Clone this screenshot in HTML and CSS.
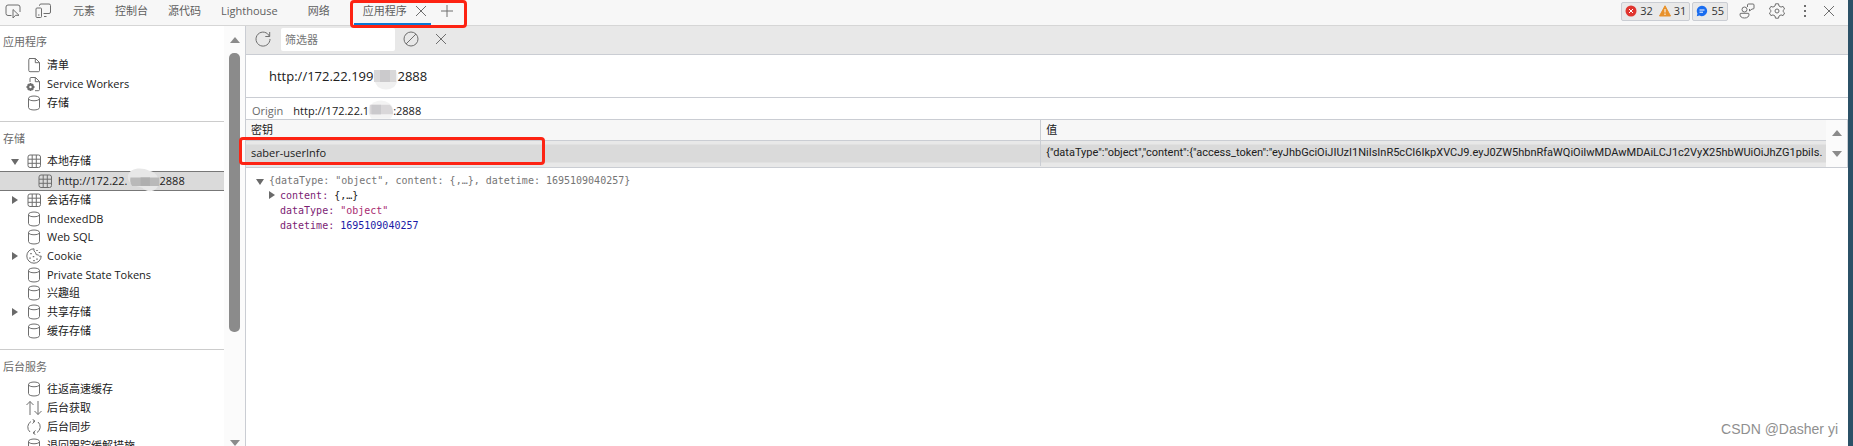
FILE: index.html
```html
<!DOCTYPE html>
<html lang="zh-CN">
<head>
<meta charset="utf-8">
<title>DevTools</title>
<link rel="stylesheet" href="styles.css">
</head>
<body>
<svg class="defs" aria-hidden="true">
  <symbol id="db" viewBox="0 0 16 16"><path d="M2.5 3.500C2.500 .2 13.500 .2 13.500 3.500V12.500C13.500 15.800 2.500 15.800 2.500 12.500ZM2.500 3.500C2.500 6.500 13.500 6.500 13.500 3.500"/></symbol>
  <symbol id="grid" viewBox="0 0 16 16"><rect x="2" y="2" width="12.500" height="12.500" rx="2"/><path d="M2 6.200H14.500M2 10.300H14.500M6.200 2V14.500M10.300 2V14.500"/></symbol>
  <symbol id="doc" viewBox="0 0 16 16"><path d="M3 1.500H9.500L13.500 5.500V13.500Q13.500 14.700 12.300 14.700H4Q2.800 14.700 2.800 13.500V2.700Q2.800 1.500 4 1.500M9.300 1.500V5.700H13.500"/></symbol>
  <symbol id="x" viewBox="0 0 16 16"><path d="M3 3L13 13M13 3L3 13"/></symbol>
</svg>
<div class="window">
  <header class="topbar">
    <button class="tool" aria-label="检查元素"><svg viewBox="0 0 16 16"><path d="M6.500 12.500H3Q1 12.500 1 10.500V4Q1 2 3 2H13Q15 2 15 4V9M8 6.500V15L10.500 12.300H14Z"/></svg></button>
    <button class="tool" aria-label="设备仿真"><svg viewBox="0 0 16 16"><path d="M4.500 3V2.500Q4.500 1 6 1H14Q15.500 1 15.500 2.500V9Q15.500 10.500 14 10.500H8.500M9 13.500H11.500M2 5H5.500Q6.500 5 6.500 6V13.500Q6.500 14.500 5.500 14.500H2Q1 14.500 1 13.500V6Q1 5 2 5M3 12H4.500"/></svg></button>
    <nav class="tabs">
      <button class="tab">元素</button>
      <button class="tab">控制台</button>
      <button class="tab">源代码</button>
      <button class="tab light">Lighthouse</button>
      <button class="tab net">网络</button>
      <div class="active"><button class="tab">应用程序</button><button class="close" aria-label="关闭标签"><svg><use href="#x"/></svg></button></div>
      <button class="plus" aria-label="更多标签"><svg viewBox="0 0 16 16"><path d="M8 2V14M2 8H14"/></svg></button>
      <span class="mark mark-tab"></span>
    </nav>
    <button class="badge"><svg viewBox="0 0 12 12"><circle cx="6" cy="6" r="5.500" fill="#e0352f"/><path d="M4 4L8 8M8 4L4 8" stroke="#fff"/></svg>32<svg class="warn" viewBox="0 0 12 12"><path d="M6 .8L11.500 11H.5Z" fill="#e8912a" stroke="#e8912a" stroke-linejoin="round"/><path d="M6 4V7.500M6 8.500V10" stroke="#fff"/></svg>31</button>
    <button class="badge info"><svg viewBox="0 0 12 12"><path d="M6 .8A5.200 5.200 0 1 1 3.500 10.600L.8 11.300L1.400 8.500A5.200 5.200 0 0 1 6 .8Z" fill="#1a6df0"/><path d="M3.500 5H8.500M3.500 7.200H7" stroke="#fff"/></svg>55</button>
    <button class="tool feedback" aria-label="反馈"><svg viewBox="0 0 16 16"><circle cx="5.500" cy="6.500" r="2.500"/><path d="M1 11Q1 10.300 2 10.300H9Q10 10.300 10 11Q10 15 5.500 15Q1 15 1 11ZM8.500 4V2Q8.500 1 9.500 1H14Q15 1 15 2V5Q15 6 14 6H13L10.500 8V6"/></svg></button>
    <button class="tool gear" aria-label="设置"><svg viewBox="0 0 16 16"><circle cx="8" cy="8" r="2"/><path d="M6.500 .8H9.500L10 3L12 4.100L14.100 3.400L15.600 6L14 7.500V8.500L15.600 10L14.100 12.600L12 11.900L10 13L9.500 15.200H6.500L6 13L4 11.900L1.900 12.600L.4 10L2 8.500V7.500L.4 6L1.900 3.400L4 4.100L6 3Z" stroke-linejoin="round"/></svg></button>
    <button class="tool dots" aria-label="更多"><svg viewBox="0 0 16 16"><path d="M8 2V4M8 7V9M8 12V14" stroke-width="2"/></svg></button>
    <button class="tool" aria-label="关闭"><svg><use href="#x"/></svg></button>
  </header>
  <div class="body">
    <aside class="sidebar">
      <div class="sections">
        <section>
          <h2>应用程序</h2>
          <ul>
            <li><svg><use href="#doc"/></svg>清单</li>
            <li><svg viewBox="0 0 16 16"><path d="M4 6V2.700Q4 1.500 5 1.500H9.500L13.500 5.500V13.500Q13.500 14.700 12.300 14.700H9M9.300 1.500V5.700H13.500"/><circle cx="4.500" cy="11" r="2.200" stroke-width="2"/><path d="M4.500 7V8.500M4.500 13.500V15M.5 11H2M7 11H8.500M1.800 8.300L2.800 9.300M6.200 12.700L7.200 13.700M7.200 8.300L6.200 9.300M2.800 12.700L1.800 13.700" stroke-width="2"/></svg>Service Workers</li>
            <li><svg><use href="#db"/></svg>存储</li>
          </ul>
        </section>
        <section>
          <h2>存储</h2>
          <ul>
            <li class="open"><svg><use href="#grid"/></svg>本地存储</li>
            <li class="child"><svg><use href="#grid"/></svg>http://172.22.<span class="redact r-side"><svg viewBox="0 0 40 30"><path d="M1 10C3 0 18 0 26 4C36 6 38 14 37 20C35 30 23 30 18 24C10 22 0 20 1 10Z" fill="#e7e7e7"/><path d="M4 12H38V22H6Q3 18 4 12Z" fill="#b9b9b9"/><path d="M16 12H27V22H16Z" fill="#afafaf"/></svg></span>2888</li>
            <li class="closed"><svg><use href="#grid"/></svg>会话存储</li>
            <li><svg><use href="#db"/></svg>IndexedDB</li>
            <li><svg><use href="#db"/></svg>Web SQL</li>
            <li class="closed"><svg viewBox="0 0 16 16"><path d="M8 .8A7.200 7.200 0 1 0 15.200 8Q13.500 9 12.300 7Q9.500 7.500 9.500 4.500Q7.200 3.500 8 .8Z"/><path d="M5 5V6.200M4 9.500V10.700M7.500 8V9.200M8 12V13.200M11 10.500V11.700M11 2V3M13.500 4V5" stroke-width="1.500"/></svg>Cookie</li>
            <li><svg><use href="#db"/></svg>Private State Tokens</li>
            <li><svg><use href="#db"/></svg>兴趣组</li>
            <li class="closed"><svg><use href="#db"/></svg>共享存储</li>
            <li><svg><use href="#db"/></svg>缓存存储</li>
          </ul>
        </section>
        <section>
          <h2>后台服务</h2>
          <ul>
            <li><svg><use href="#db"/></svg>往返高速缓存</li>
            <li><svg viewBox="0 0 16 16"><path d="M4 15V1.500M.5 5L4 1.500L7.500 5M12 1V14.500M8.500 11L12 14.500L15.500 11"/></svg>后台获取</li>
            <li><svg viewBox="0 0 16 16"><path d="M5 2.500A6.500 6.500 0 0 0 4 13M11 13.500A6.500 6.500 0 0 0 12 3M6.500 .2L9 2.200L6.500 4.500M9.500 11.500L7 13.800L9.500 15.800M9 2.200H7M7 13.800H9"/></svg>后台同步</li>
            <li><svg><use href="#db"/></svg>退回跟踪缓解措施</li>
          </ul>
        </section>
      </div>
      <div class="scrollbar"><i class="up"></i><i class="thumb"></i><i class="down"></i></div>
    </aside>
    <main>
      <div class="toolbar">
        <button class="tool" aria-label="刷新"><svg viewBox="0 0 16 16"><path d="M14.500 5.500A7 7 0 1 0 15 8M14.700 1V5.500H10.300"/></svg></button>
        <input type="text" placeholder="筛选器" aria-label="筛选器">
        <button class="tool" aria-label="全部清除"><svg viewBox="0 0 16 16"><circle cx="8" cy="8" r="7"/><path d="M13 3L3 13"/></svg></button>
        <button class="tool" aria-label="删除所选项"><svg><use href="#x"/></svg></button>
      </div>
      <h1>http://172.22.199<span class="redact r-title"><svg viewBox="0 0 26 24"><path d="M2 2H24Q28 12 22 19Q14 24 6 19Q0 12 2 2Z" fill="#f0f0f0"/><path d="M2 2H24V14H2Z" fill="#d9d8d9"/><path d="M8 2H18V14H8Z" fill="#cbcacc"/></svg></span>2888</h1>
      <div class="origin"><span class="label">Origin</span><span>http://172.22.1<span class="redact r-origin"><svg viewBox="0 0 30 22"><path d="M1 8Q6 0 15 0Q26 1 29 9Q30 17 26 21H4Q-1 15 1 8Z" fill="#f3f3f3"/><path d="M2 5H25Q29 8 29 16H2Z" fill="#d9d7d9"/><path d="M4 5H15V16H4Z" fill="#cac9cc"/></svg></span>:2888</span></div>
      <div class="grid">
        <table>
          <thead><tr><th>密钥</th><th>值</th></tr></thead>
          <tbody><tr><td>saber-userInfo</td><td class="value">{"dataType":"object","content":{"access_token":"eyJhbGciOiJIUzI1NiIsInR5cCI6IkpXVCJ9.eyJ0ZW5hbnRfaWQiOiIwMDAwMDAiLCJ1c2VyX25hbWUiOiJhZG1pbiIs.</td></tr></tbody>
        </table>
        <div class="stepper"><i class="up"></i><i class="down"></i></div>
        <span class="mark mark-row"></span>
      </div>
      <div class="tree">
        <div class="root open">{dataType: "object", content: {,…}, datetime: 1695109040257}</div>
        <div class="prop closed"><b>content:</b> {,…}</div>
        <div class="prop"><b>dataType:</b> <span class="str">"object"</span></div>
        <div class="prop"><b>datetime:</b> <span class="num">1695109040257</span></div>
      </div>
    </main>
  </div>
  <div class="watermark">CSDN @Dasher yi</div>
</div>
</body>
</html>
```
FILE: styles.css
```css
* { box-sizing: border-box; }
body {
  margin: 0;
  font: 11px/18px "Open Sans", "Noto Sans CJK SC", sans-serif;
  color: #202020;
  background: #fff;
}
button { border: 0; padding: 0; background: none; font: inherit; color: inherit; }
svg { fill: none; stroke: #6e6e6e; width: 16px; height: 16px; flex: none; display: block; }
.defs { position: absolute; width: 0; height: 0; }
.window {
  position: relative;
  height: 100vh;
  display: flex;
  flex-direction: column;
  overflow: hidden;
  border-right: 5px solid #2b5167;
}

.topbar {
  height: 26px;
  flex: none;
  display: flex;
  align-items: center;
  padding: 0 11px 3px 5px;
  gap: 14px;
  background: #f7f7f7;
  border-bottom: 1px solid #d6d6d6;
  color: #5f5f5f;
}
.tool { flex: none; }
.gear { margin-right: -2px; }
.dots { margin-right: -6px; }
.tabs { flex: 1; display: flex; align-items: center; position: relative; padding-left: 8px; }
.tab { margin-right: 20px; white-space: nowrap; }
.tab.light { margin-right: 30px; }
.tab.net { margin-right: 24px; }
.active { display: flex; align-items: center; gap: 6px; height: 22px; padding: 0 2px 0 9px; position: relative; }
.active::after { content: ""; position: absolute; left: 0; right: 0; bottom: -3px; height: 2px; background: #0a78d4; }
.active .tab { margin: 0; }
.plus { margin-left: 8px; }
.mark { position: absolute; border: 3px solid #fd2313; border-radius: 4px; z-index: 2; }
.mark-tab { left: 285px; top: 0; width: 117px; height: 28px; }
.badge {
  display: flex;
  align-items: center;
  gap: 3px;
  height: 19px;
  padding: 0 3px;
  border: 1px solid #cacdd3;
  border-radius: 2px;
  background: #e9e9e9;
  color: #333;
}
.badge svg { width: 12px; height: 12px; stroke: none; }
.badge .warn { margin-left: 3px; }
.badge.info { margin-left: -12px; margin-right: -3px; }

.body { flex: 1; min-height: 0; display: flex; }
.sidebar { flex: none; width: 246px; display: flex; border-right: 1px solid #cacdd3; overflow: hidden; }
.sections { flex: 1; }
section { padding-bottom: 9px; }
section + section { border-top: 1px solid #ccc; }
h2 { margin: 0; padding: 7px 3px 5px; font-size: 11px; line-height: 18px; font-weight: 400; color: #6a6a6a; }
section + section h2 { padding: 8px 3px 4px; }
ul { margin: 0; padding: 0; list-style: none; display: grid; grid-auto-rows: 1fr; }
section:nth-child(1) ul { height: 56px; }
section:nth-child(2) ul { height: 188px; }
section:nth-child(3) ul { height: 75px; }
li { display: flex; align-items: center; padding-left: 26px; position: relative; white-space: nowrap; }
li > svg { margin-right: 5px; }
.child { padding-left: 37px; background: #dadada; border: solid #777; border-width: 1px 0; }
.open::before, .closed::before, .up, .down { content: ""; width: 0; height: 0; border: solid transparent; }
.open::before, .closed::before { position: absolute; }
.open::before { left: 11px; top: 7px; border-width: 6px 4px 0; border-top-color: #6a6a6a; }
.closed::before { left: 12px; top: 5px; border-width: 4px 0 4px 6px; border-left-color: #6a6a6a; }
.redact { display: inline-block; position: relative; height: 10px; }
.redact svg { position: absolute; stroke: none; }
.r-side { width: 32px; }
.r-side svg { width: 34px; height: 28px; left: -1px; top: -10px; }
.r-title { width: 24px; }
.r-title svg { width: 26px; height: 24px; left: -1px; top: -3px; }
.r-origin { width: 24px; }
.r-origin svg { width: 26px; height: 22px; left: -1px; top: -6px; }
.scrollbar { width: 21px; background: #fbfbfb; display: flex; flex-direction: column; align-items: center; padding-top: 11px; }
.up { border-width: 0 5px 6px; border-bottom-color: #8b8b8b; }
.down { border-width: 6px 5px 0; border-top-color: #8b8b8b; }
.thumb { width: 11px; height: 279px; margin: 10px 0 auto; border-radius: 5px; background: #8b8b8b; }

main { flex: 1; min-width: 0; }
.toolbar { height: 29px; display: flex; align-items: center; gap: 10px; padding: 0 9px 2px; background: #e8e8e8; border-bottom: 1px solid #cacdd3; }
.toolbar input {
  width: 114px;
  height: 23px;
  margin-right: -2px;
  border: 0;
  border-radius: 2px;
  padding: 0 4px;
  font: inherit;
  background: #fff;
}
.toolbar input::placeholder { color: #757575; }
.toolbar .tool + .tool { margin-left: 4px; }
h1 { margin: 0; height: 43px; padding: 11px 23px; font-size: 13px; line-height: 20px; font-weight: 400; border-bottom: 1px solid #cacdd3; }
.origin { display: flex; gap: 10px; height: 21px; padding: 4px 6px 0; }
.label { color: #6a6a6a; }
.grid { position: relative; display: flex; height: 49px; border: solid #cacdd3; border-width: 1px 1px 1px 0; background: #e8e8e8; }
table { flex: 1; min-width: 0; table-layout: fixed; border-collapse: collapse; width: 0; height: 46px; }
th, td { padding: 0 5px; text-align: left; font-weight: 400; white-space: nowrap; line-height: 18px; }
th:first-child { width: 50.3%; }
th { height: 20px; background: #f7f7f7; border-bottom: 1px solid #cacdd3; }
td { background: linear-gradient(#e8e8e8 4px, #dadada 4px 22px, #e8e8e8 22px); }
th + th, td + td { border-left: 1px solid #cacdd3; }
.value { padding-right: 0; font-family: Roboto, sans-serif; overflow: hidden; }
.stepper { width: 21px; background: #fbfbfb; display: flex; flex-direction: column; align-items: center; padding-top: 10px; gap: 15px; }
.mark-row { left: -7px; top: 17px; width: 306px; height: 28px; }
.tree { padding: 5px 0 0 9px; font: 10px/15px "DejaVu Sans Mono", monospace; }
.tree div { position: relative; white-space: pre; }
.root { padding-left: 14px; color: #757575; }
.prop { padding-left: 25px; }
.prop b { font-weight: 400; color: #7c1d74; }
.str { color: #a82a6f; }
.num { color: #1a1aa6; }
.tree .open::before { left: 1px; top: 6px; }
.tree .closed::before { left: 14px; top: 3px; }
.watermark { position: absolute; right: 10px; bottom: 7px; font: 14px/20px "Liberation Sans", sans-serif; color: #8f8f8f; }
```
